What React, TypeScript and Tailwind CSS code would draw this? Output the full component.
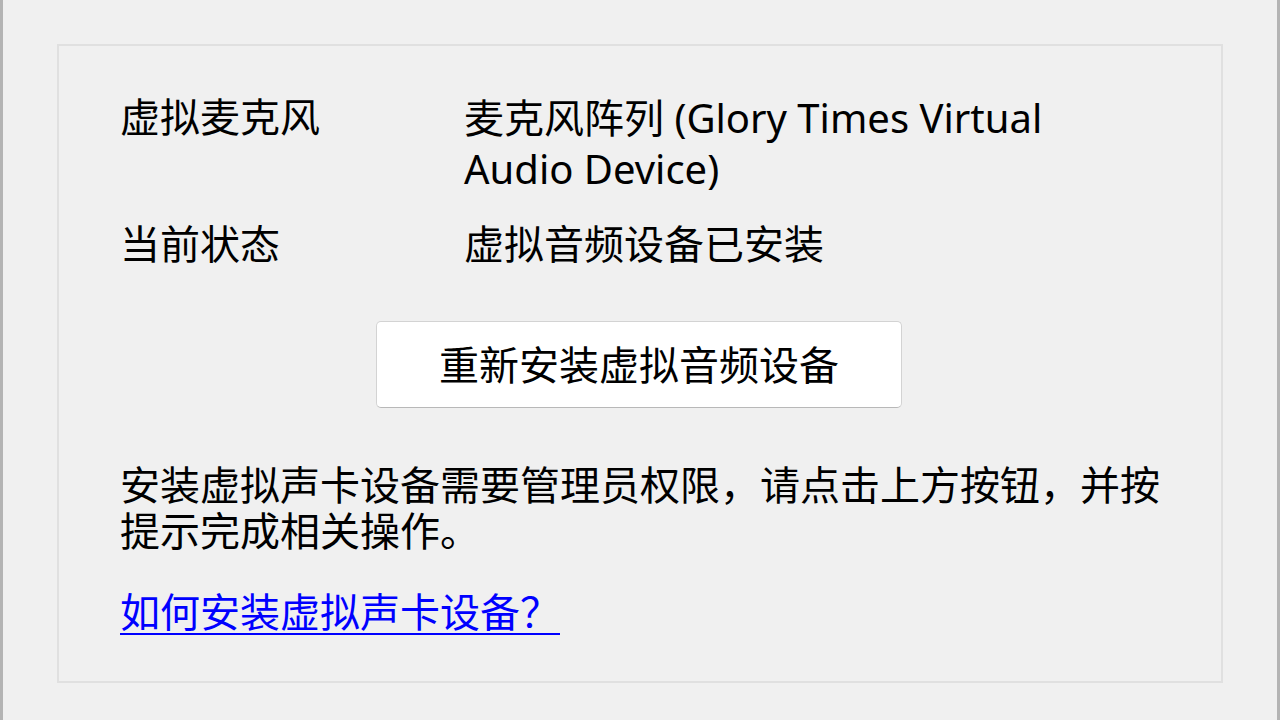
import React from 'react';

const font = { fontFamily: '"Noto Sans", "Noto Sans CJK SC", sans-serif' };

export default function App() {
  return (
    <div
      className="w-[1280px] h-[720px] bg-[#f0f0f0] border-l-[3px] border-r-[3px] border-[#b4b4b4] flex justify-center pt-[44px] text-black"
      style={font}
    >
      <div className="w-[1166px] h-[639px] border-2 border-[#e0e0e0] pt-[48px] pl-[61px] flex flex-col text-[40px] leading-[46px]">
        {/* Info rows */}
        <div className="flex">
          <div className="w-[344px] shrink-0">虚拟麦克风</div>
          <div className="w-[640px] leading-[51px] -mt-[2px]">麦克风阵列 (Glory Times Virtual Audio Device)</div>
        </div>
        <div className="flex mt-[27px]">
          <div className="w-[344px] shrink-0">当前状态</div>
          <div>虚拟音频设备已安装</div>
        </div>

        {/* Action */}
        <div className="flex justify-center mt-[54px] pr-[63px]">
          <button className="w-[526px] h-[87px] bg-white border border-[#d3d3d3] border-b-[#b8b8b8] rounded-[5px] text-[40px] leading-[46px]">
            重新安装虚拟音频设备
          </button>
        </div>

        <p className="mt-[54px] w-[1050px]">
          安装虚拟声卡设备需要管理员权限，请点击上方按钮，并按提示完成相关操作。
        </p>

        <a href="#" className="mt-[35px] self-start text-[#0000ff] underline underline-offset-[6px] decoration-2">
          如何安装虚拟声卡设备？
        </a>
      </div>
    </div>
  );
}
